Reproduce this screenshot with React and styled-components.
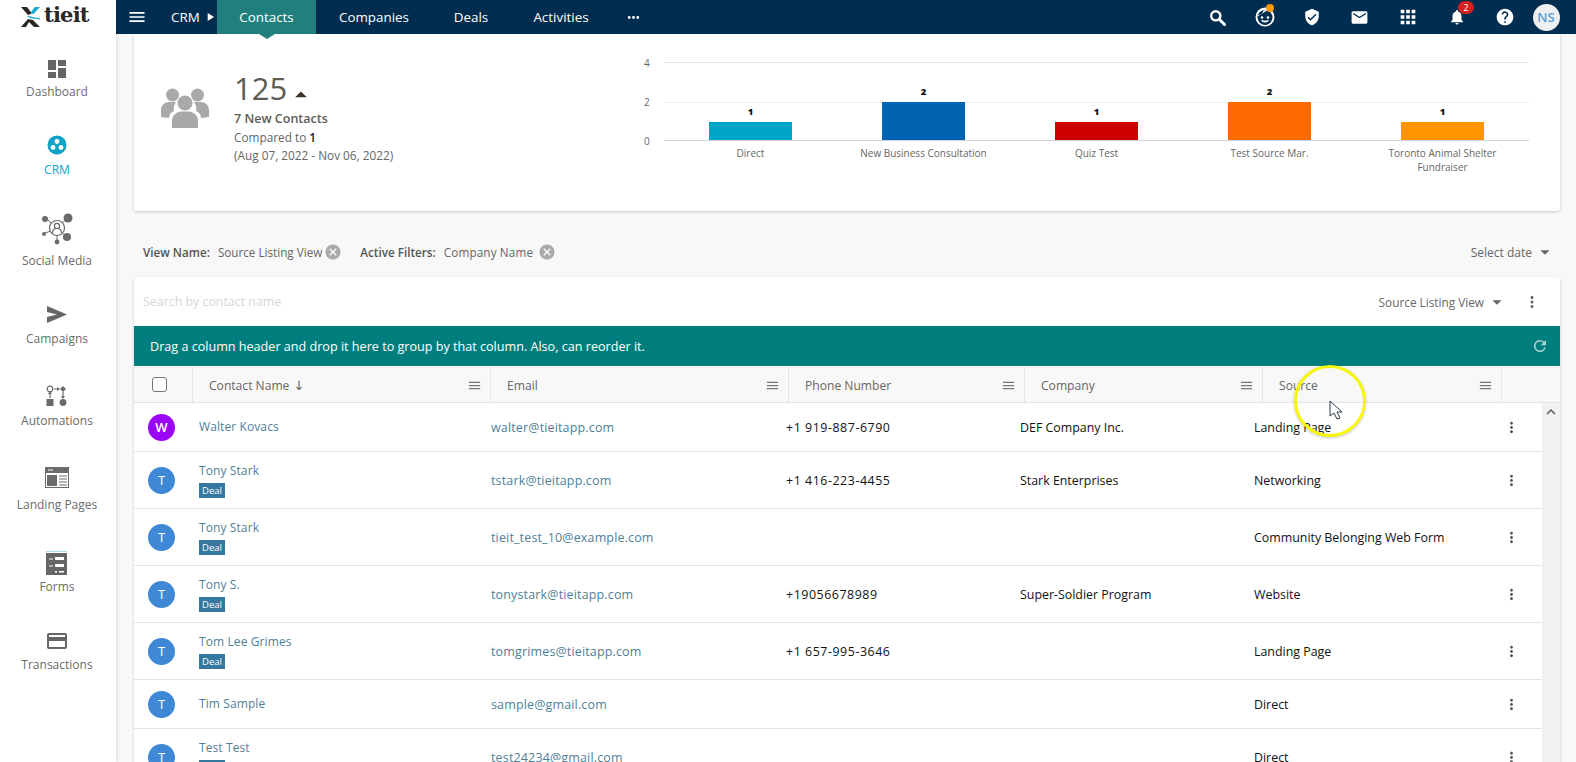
import React from 'react';
import styled, { createGlobalStyle } from 'styled-components';
import {
  MdMenu, MdVerifiedUser, MdEmail, MdApps, MdNotifications, MdHelp,
  MdDashboard, MdCreditCard, MdMoreVert, MdMoreHoriz, MdArrowDropDown,
  MdArrowDropUp, MdCancel, MdRefresh, MdPlayArrow, MdKeyboardArrowUp,
} from 'react-icons/md';

const GlobalStyle = createGlobalStyle`
  html, body {
    margin: 0;
    padding: 0;
    height: 100%;
    overflow: hidden;
    background: #f8f8f8;
    font-family: 'Open Sans', 'Noto Sans', sans-serif;
  }
  #root { height: 100%; }
`;

const Shell = styled.div`
  display: flex;
  width: 1576px;
  height: 762px;
  overflow: hidden;
  position: relative;
`;

const Sidebar = styled.aside`
  flex: 0 0 116px;
  box-sizing: border-box;
  padding-right: 2px;
  background: #fff;
  box-shadow: 1px 0 3px rgba(0, 0, 0, 0.12);
  z-index: 3;
  display: flex;
  flex-direction: column;
  align-items: center;
`;

const Logo = styled.div`
  height: 34px;
  width: 100%;
  box-sizing: border-box;
  padding-left: 21px;
  display: flex;
  align-items: center;
  gap: 4px;
  margin-bottom: 22px;
`;

const LogoWord = styled.span`
  font-family: 'DejaVu Serif', 'Liberation Serif', serif;
  font-weight: 700;
  font-size: 21px;
  line-height: 1;
  letter-spacing: -0.8px;
  color: #2b2723;
  margin-top: -5px;
`;

const NavItem = styled.div`
  display: flex;
  flex-direction: column;
  align-items: center;
  flex: 0 0 ${(p) => p.$h}px;
  width: 100%;
  color: ${(p) => (p.$active ? '#0fa3c8' : '#6b6b6b')};
  font-size: 12px;
  line-height: 16px;
  gap: ${(p) => p.$gap}px;
`;

const NavIconBox = styled.div`
  height: 26px;
  width: 36px;
  display: flex;
  align-items: center;
  justify-content: center;
  color: #666;
`;

const Column = styled.div`
  flex: 1;
  min-width: 0;
  display: flex;
  flex-direction: column;
`;

const TopBar = styled.header`
  flex: 0 0 34px;
  background: #012d50;
  display: flex;
  align-items: center;
  color: #fff;
  font-size: 13.4px;
  position: relative;
  z-index: 2;
`;

const Burger = styled.div`
  width: 43px;
  padding-left: 11px;
  box-sizing: border-box;
  display: flex;
`;

const Crumb = styled.div`
  display: flex;
  align-items: center;
  margin-left: 12px;
  width: 46px;
  gap: 3px;
`;

const Tab = styled.div`
  height: 34px;
  display: flex;
  align-items: center;
  justify-content: center;
  width: ${(p) => p.$w}px;
  position: relative;
  background: ${(p) => (p.$active ? '#217f7d' : 'transparent')};
  &::after {
    content: ${(p) => (p.$active ? "''" : 'none')};
    position: absolute;
    top: 34px;
    left: 50%;
    margin-left: -8px;
    border-left: 8px solid transparent;
    border-right: 8px solid transparent;
    border-top: 5px solid #217f7d;
  }
`;

const MoreTabs = styled.div`
  display: flex;
  margin-left: 13px;
`;

const TopIcons = styled.div`
  margin-left: auto;
  display: flex;
  align-items: center;
  height: 34px;
  padding-right: 13px;
`;

const TopIcon = styled.div`
  width: ${(p) => p.$w}px;
  display: flex;
  justify-content: center;
  align-items: center;
  position: relative;
`;

const Dot = styled.span`
  position: absolute;
  top: -3px;
  left: 25px;
  width: 8px;
  height: 8px;
  border-radius: 50%;
  background: #ff9a0e;
`;

const Badge = styled.span`
  position: absolute;
  top: -7px;
  left: 25px;
  width: 16px;
  height: 13px;
  border-radius: 7px;
  background: #d3201c;
  color: #fff;
  font-size: 9.5px;
  line-height: 13px;
  text-align: center;
`;

const Avatar = styled.div`
  width: 27px;
  height: 27px;
  border-radius: 50%;
  background: #efefef;
  color: #5a9fd4;
  font-size: 13px;
  font-weight: 600;
  display: flex;
  align-items: center;
  justify-content: center;
`;

const Content = styled.main`
  flex: 1;
  min-height: 0;
  padding: 0 16px 0 18px;
  overflow: hidden;
`;

const StatsCard = styled.section`
  height: 177px;
  background: #fff;
  border-radius: 0 0 3px 3px;
  box-shadow: 0 1px 3px rgba(0, 0, 0, 0.2);
  display: flex;
`;

const Summary = styled.div`
  flex: 0 0 486px;
  display: flex;
  padding: 36px 0 0 27px;
  box-sizing: border-box;
`;

const PeopleBox = styled.div`
  width: 73px;
  padding-top: 18px;
`;

const Big = styled.div`
  font-size: 31px;
  line-height: 36px;
  color: #5c5c54;
  display: flex;
  align-items: flex-end;
`;

const BigCaret = styled(MdArrowDropUp)`
  margin: 0 0 -3px 0;
`;

const Lines = styled.div`
  margin-top: 4px;
  font-size: 11.8px;
  line-height: 18px;
  color: #666;
  b { font-weight: 600; color: #222; }
`;

const NewLine = styled.div`
  font-weight: 600;
  font-size: 12.5px;
  color: #5c5c54;
`;

const Chart = styled.div`
  flex: 1;
  padding: 20px 31px 0 0;
  display: grid;
  grid-template-columns: 44px 1fr;
  grid-template-rows: 87px auto;
`;

const Axis = styled.div`
  display: flex;
  flex-direction: column;
  justify-content: space-between;
  padding-left: 24px;
  font-size: 10px;
  color: #666;
  line-height: 10px;
  margin-top: 4px;
  height: 88px;
`;

const Plot = styled.div`
  border-bottom: 1px solid #cfd2e3;
  margin-top: 8px;
  height: 79px;
  box-sizing: border-box;
  display: grid;
  grid-template-columns: repeat(5, 1fr);
  align-items: end;
  background: linear-gradient(#e8e8ee, #e8e8ee) top / 100% 1px no-repeat,
    linear-gradient(#f0f0f2, #f0f0f2) 0 40px / 100% 1px no-repeat;
`;

const BarCell = styled.div`
  display: flex;
  flex-direction: column;
  align-items: center;
  font-size: 9.5px;
  line-height: 13px;
  font-weight: 800;
  color: #111;
`;

const Bar = styled.div`
  width: 83px;
  height: ${(p) => p.$v * 20 - 2}px;
  background: ${(p) => p.$c};
  margin-top: 4px;
`;

const Labels = styled.div`
  grid-column: 2;
  display: grid;
  grid-template-columns: repeat(5, 1fr);
  padding-top: 6px;
  font-size: 10px;
  line-height: 13.5px;
  color: #666;
  text-align: center;
`;

const LabelCell = styled.span`
  padding: 0 10px;
`;

const FilterRow = styled.div`
  display: flex;
  align-items: center;
  height: 66px;
  box-sizing: border-box;
  padding: 15px 0 0 9px;
  font-size: 11.7px;
  color: #666;
`;

const FilterKey = styled.span`
  font-weight: 600;
  color: #555;
  margin-right: 8px;
`;

const FilterValue = styled.span`
  margin-right: ${(p) => p.$gap}px;
  letter-spacing: ${(p) => p.$track ?? 0}px;
`;

const Clear = styled(MdCancel)`
  color: #aaa;
  margin-right: ${(p) => p.$after ?? 0}px;
`;

const SelectDate = styled.div`
  margin: 1px 4px 0 auto;
  display: flex;
  align-items: center;
  gap: 2px;
  font-size: 12px;
`;

const Panel = styled.section`
  background: #fff;
  border-radius: 3px 3px 0 0;
  box-shadow: 0 1px 3px rgba(0, 0, 0, 0.2);
`;

const SearchRow = styled.div`
  height: 49px;
  display: flex;
  align-items: center;
  padding: 0 19px 0 9px;
  font-size: 11.8px;
  color: #666;
`;

const SearchText = styled.span`
  color: #d6d6d6;
  font-size: 12.4px;
  margin-right: auto;
`;

const ViewCaret = styled(MdArrowDropDown)`
  margin: 0 15px 0 2px;
`;

const GroupBar = styled.div`
  height: 40px;
  background: #007e7e;
  color: #fff;
  display: flex;
  align-items: center;
  justify-content: space-between;
  padding: 0 11px 0 16px;
  font-size: 12.6px;
`;

const HeadRow = styled.div`
  display: grid;
  grid-template-columns: 59px 298px 298px 236px 238px 239px 1fr;
  height: 34px;
  margin-top: 1px;
  background: #f8f8f8;
  border-top: 1px solid #eee;
  border-bottom: 1px solid #e4e4e4;
  font-size: 12.1px;
  color: #666;
`;

const HeadCell = styled.div`
  display: flex;
  align-items: center;
  justify-content: space-between;
  padding: 1px 8px 0 ${(p) => p.$pad ?? 16}px;
  border-right: 1px solid #e4e4e4;
  &:last-child { border-right: 0; }
`;

const SortArrow = styled.span`
  font-family: 'DejaVu Sans', sans-serif;
  font-size: 13px;
  margin-left: 4px;
`;

const Check = styled.span`
  width: 13px;
  height: 13px;
  border: 1px solid #777;
  border-radius: 3px;
  background: #fff;
  margin: 0 0 3px 3px;
`;

const Body = styled.div`
  display: flex;
`;

const Rows = styled.div`
  flex: 1;
  min-width: 0;
`;

const Row = styled.div`
  display: grid;
  grid-template-columns: 65px 292px 295px 234px 234px 249px 1fr;
  height: ${(p) => p.$h}px;
  border-bottom: 1px solid #e4e4e4;
  align-items: center;
  font-size: 12.4px;
  color: #111;
`;

const RoundAvatar = styled.span`
  width: 27px;
  height: 27px;
  border-radius: 50%;
  margin-left: 14px;
  background: ${(p) => p.$c};
  color: #fff;
  font-size: 13px;
  display: flex;
  align-items: center;
  justify-content: center;
  font-weight: ${(p) => (p.$c === '#9a05f5' ? 600 : 400)};
`;

const ContactName = styled.div`
  color: #4f7f98;
  font-size: 12px;
  line-height: 16px;
  letter-spacing: 0.1px;
`;

const EmailText = styled.div`
  color: #4f7f98;
  font-size: 12.5px;
  letter-spacing: 0.15px;
`;

const PhoneText = styled.div`
  letter-spacing: 0.55px;
`;

const DealTag = styled.span`
  display: inline-block;
  background: #34789f;
  color: #fff;
  font-size: 9.5px;
  font-weight: 500;
  line-height: 15px;
  padding: 0 3px;
  margin-top: 4px;
`;

const NameCell = styled.div`
  display: flex;
  flex-direction: column;
  align-items: flex-start;
`;

const Dots = styled.div`
  display: flex;
  color: #555;
`;

const Scroll = styled.div`
  flex: 0 0 18px;
  background: #f1f1f1;
  display: flex;
  justify-content: center;
  align-items: flex-start;
  color: #555;
`;

const Ring = styled.div`
  position: absolute;
  left: 1294px;
  top: 365px;
  width: 72px;
  height: 72px;
  box-sizing: border-box;
  border: 3.5px solid #f6f60a;
  border-radius: 50%;
  box-shadow: 0 1px 3px rgba(0, 0, 0, 0.25);
  z-index: 5;
  pointer-events: none;
`;

const Pointer = styled.svg`
  position: absolute;
  left: 1329px;
  top: 400px;
  z-index: 6;
`;

const LogoMark = () => (
  <svg width="19" height="20" viewBox="0 0 19 20">
    <path d="M0 0h6l5 6.5-4 1.5z" fill="#2b2723" />
    <path d="M19 0h-5l-4 5 2 2.5z" fill="#12a7cf" />
    <path d="M5 8.5l14 3v1L9 11z" fill="#12a7cf" />
    <path d="M0 20l7-8 5 1 7 7h-6l-5-5-3 5z" fill="#2b2723" />
  </svg>
);

const SearchGlyph = () => (
  <svg width="17" height="17" viewBox="0 0 17 17" fill="none" stroke="#fff">
    <circle cx="6.8" cy="6.8" r="4.6" strokeWidth="2.4" />
    <path d="M10.5 10.5l5 5" strokeWidth="3" strokeLinecap="round" />
  </svg>
);

const KidFace = () => (
  <svg width="20" height="20" viewBox="0 0 20 20">
    <circle cx="10" cy="10" r="9.5" fill="#fff" />
    <circle cx="10" cy="10.5" r="7.5" fill="#012d50" />
    <path d="M3 8c2 0 4-1 5-3-1-1.5 3-3 6-1.5C11 3 9 6 3 9z" fill="#fff" />
    <circle cx="7" cy="10.5" r="1.3" fill="#fff" />
    <circle cx="13" cy="10.5" r="1.3" fill="#fff" />
    <path d="M6.5 13.5c2 2 5 2 7 0-2 .8-5 .8-7 0z" fill="#fff" stroke="#fff" />
  </svg>
);

const CrmIcon = () => (
  <svg width="20" height="20" viewBox="0 0 20 20">
    <circle cx="10" cy="10" r="9.5" fill="#0fa3c8" />
    <circle cx="10" cy="6.5" r="2.4" fill="#fff" />
    <circle cx="6" cy="12.5" r="2.4" fill="#fff" />
    <circle cx="14" cy="12.5" r="2.4" fill="#fff" />
  </svg>
);

const SocialIcon = () => (
  <svg width="32" height="32" viewBox="0 0 32 32" fill="#6b6b6b" stroke="#6b6b6b">
    <path d="M6 6l10 10M27 4L16 16M26 24L16 16M16 16v12M4 20l12-4" strokeWidth="1" />
    <circle cx="4" cy="6" r="3" stroke="none" />
    <circle cx="27" cy="5" r="4.5" stroke="none" />
    <circle cx="26" cy="24" r="4" stroke="none" />
    <circle cx="16" cy="29" r="2.4" stroke="none" />
    <circle cx="3" cy="21" r="2" stroke="none" />
    <circle cx="16" cy="15" r="7.5" fill="#fff" strokeWidth="1.2" />
    <circle cx="16" cy="13" r="2.6" fill="#fff" strokeWidth="1.2" />
    <path d="M11.5 20c0-6 9-6 9 0" fill="#fff" strokeWidth="1.2" />
  </svg>
);

const CampaignIcon = () => (
  <svg width="20" height="17" viewBox="0 0 20 17">
    <path d="M0 0l20 8.5L0 17v-6l10-2.5L0 6z" fill="#666" />
  </svg>
);

const AutomationIcon = () => (
  <svg width="22" height="22" viewBox="0 0 22 22" fill="#6b6b6b" stroke="#6b6b6b">
    <circle cx="4" cy="4" r="2.8" fill="#fff" strokeWidth="1.2" />
    <path d="M8 4h5M4 8v5M17 7v6" strokeWidth="1.2" />
    <path d="M11 2l3 2-3 2zM2 9l2-3 2 3zM15 11l2 3 2-3z" stroke="none" />
    <path d="M17 1l3 3-3 3-3-3z" stroke="none" />
    <rect x="0.5" y="14" width="7" height="7" stroke="none" />
    <circle cx="17" cy="17.5" r="3.4" stroke="none" />
  </svg>
);

const LandingIcon = () => (
  <svg width="24" height="21" viewBox="0 0 24 21">
    <rect x="0.5" y="0.5" width="23" height="20" fill="#fff" stroke="#6b6b6b" />
    <rect x="0" y="0" width="24" height="6" fill="#6b6b6b" />
    <rect x="3" y="2.5" width="5" height="1" fill="#fff" />
    <rect x="2" y="8" width="10" height="11" fill="#6b6b6b" />
    <path d="M14 9h8M14 12h8M14 15h8M14 18h8" stroke="#6b6b6b" />
  </svg>
);

const FormsIcon = () => (
  <svg width="22" height="24" viewBox="0 0 22 24">
    <rect x="0" y="0" width="21" height="1" fill="#a9d8ea" />
    <rect x="0" y="2" width="21" height="22" fill="#666" />
    <path d="M3 8h4M3 15h4" stroke="#fff" />
    <rect x="9" y="6" width="9" height="3" fill="#fff" />
    <rect x="9" y="13" width="9" height="3" fill="#fff" />
    <rect x="9" y="20" width="2" height="1.5" fill="#fff" />
    <rect x="13" y="20" width="5" height="1.5" fill="#fff" />
  </svg>
);

const PeopleIcon = () => (
  <svg width="48" height="40" viewBox="0 0 48 40" fill="#a9a9a9">
    <circle cx="11.5" cy="7" r="6.5" />
    <circle cx="36.5" cy="7" r="6.5" />
    <path d="M0 29V22c0-5 4-8 8-8h7c-2 3-3 6-2 9-3 1-5 4-5 7z" />
    <path d="M48 29V22c0-5-4-8-8-8h-7c2 3 3 6 2 9 3 1 5 4 5 7z" />
    <circle cx="24" cy="15" r="7.5" />
    <path d="M11 40V33c0-6 5-9.5 9-9.5h8c4 0 9 3.5 9 9.5v7c-8 1-18 1-26 0z" />
  </svg>
);

const navItems = [
  { label: 'Dashboard', h: 76, gap: 2, icon: <MdDashboard size={24} /> },
  { label: 'CRM', h: 84, gap: 4, active: true, icon: <CrmIcon /> },
  { label: 'Social Media', h: 85, gap: 11, icon: <SocialIcon /> },
  { label: 'Campaigns', h: 82, gap: 4, icon: <CampaignIcon /> },
  { label: 'Automations', h: 81, gap: 4, icon: <AutomationIcon /> },
  { label: 'Landing Pages', h: 86, gap: 7, icon: <LandingIcon /> },
  { label: 'Forms', h: 78, gap: 3, icon: <FormsIcon /> },
  { label: 'Transactions', h: 80, gap: 3, icon: <MdCreditCard size={24} /> },
];

const bars = [
  { label: 'Direct', v: 1, c: '#00a4c7' },
  { label: 'New Business Consultation', v: 2, c: '#0063b1' },
  { label: 'Quiz Test', v: 1, c: '#cc0000' },
  { label: 'Test Source Mar.', v: 2, c: '#ff6a00' },
  { label: 'Toronto Animal Shelter Fundraiser', v: 1, c: '#ff9600' },
];

const contacts = [
  { i: 'W', c: '#9a05f5', name: 'Walter Kovacs', email: 'walter@tieitapp.com', phone: '+1 919-887-6790', company: 'DEF Company Inc.', source: 'Landing Page', h: 48 },
  { i: 'T', name: 'Tony Stark', deal: true, email: 'tstark@tieitapp.com', phone: '+1 416-223-4455', company: 'Stark Enterprises', source: 'Networking', h: 56 },
  { i: 'T', name: 'Tony Stark', deal: true, email: 'tieit_test_10@example.com', source: 'Community Belonging Web Form', h: 56 },
  { i: 'T', name: 'Tony S.', deal: true, email: 'tonystark@tieitapp.com', phone: '+19056678989', company: 'Super-Soldier Program', source: 'Website', h: 56 },
  { i: 'T', name: 'Tom Lee Grimes', deal: true, email: 'tomgrimes@tieitapp.com', phone: '+1 657-995-3646', source: 'Landing Page', h: 56 },
  { i: 'T', name: 'Tim Sample', email: 'sample@gmail.com', source: 'Direct', h: 48 },
  { i: 'T', name: 'Test Test', deal: true, email: 'test24234@gmail.com', source: 'Direct', h: 56 },
];

const columns = ['Email', 'Phone Number', 'Company', 'Source'];

export default function App() {
  return (
    <>
      <GlobalStyle />
      <Shell>
        <Sidebar>
          <Logo>
            <LogoMark />
            <LogoWord>tieit</LogoWord>
          </Logo>
          {navItems.map((n) => (
            <NavItem key={n.label} $h={n.h} $active={n.active} $gap={n.gap}>
              <NavIconBox>{n.icon}</NavIconBox>
              {n.label}
            </NavItem>
          ))}
        </Sidebar>
        <Column>
          <TopBar>
            <Burger><MdMenu size={20} /></Burger>
            <Crumb>CRM<MdPlayArrow size={14} /></Crumb>
            <Tab $w={99} $active>Contacts</Tab>
            <Tab $w={116}>Companies</Tab>
            <Tab $w={78}>Deals</Tab>
            <Tab $w={102}>Activities</Tab>
            <MoreTabs><MdMoreHoriz size={17} /></MoreTabs>
            <TopIcons>
              <TopIcon $w={48}><SearchGlyph /></TopIcon>
              <TopIcon $w={48}><KidFace /><Dot /></TopIcon>
              <TopIcon $w={46}><MdVerifiedUser size={18} /></TopIcon>
              <TopIcon $w={48}><MdEmail size={19} /></TopIcon>
              <TopIcon $w={50}><MdApps size={22} /></TopIcon>
              <TopIcon $w={48}><MdNotifications size={18} /><Badge>2</Badge></TopIcon>
              <TopIcon $w={48}><MdHelp size={20} /></TopIcon>
              <TopIcon $w={34}><Avatar>NS</Avatar></TopIcon>
            </TopIcons>
          </TopBar>
          <Content>
            <StatsCard>
              <Summary>
                <PeopleBox><PeopleIcon /></PeopleBox>
                <div>
                  <Big>125<BigCaret size={28} color="#3a3426" /></Big>
                  <Lines>
                    <NewLine>7 New Contacts</NewLine>
                    <div>Compared to <b>1</b></div>
                    <div>(Aug 07, 2022 - Nov 06, 2022)</div>
                  </Lines>
                </div>
              </Summary>
              <Chart>
                <Axis><span>4</span><span>2</span><span>0</span></Axis>
                <Plot>
                  {bars.map((b) => (
                    <BarCell key={b.label}>
                      {b.v}
                      <Bar $v={b.v} $c={b.c} />
                    </BarCell>
                  ))}
                </Plot>
                <Labels>
                  {bars.map((b) => <LabelCell key={b.label}>{b.label}</LabelCell>)}
                </Labels>
              </Chart>
            </StatsCard>
            <FilterRow>
              <FilterKey>View Name:</FilterKey>
              <FilterValue $gap={2}>Source Listing View</FilterValue>
              <Clear size={18} $after={18} />
              <FilterKey>Active Filters:</FilterKey>
              <FilterValue $gap={5} $track={0.15}>Company Name</FilterValue>
              <Clear size={18} />
              <SelectDate>Select date <MdArrowDropDown size={22} /></SelectDate>
            </FilterRow>
            <Panel>
              <SearchRow>
                <SearchText>Search by contact name</SearchText>
                Source Listing View
                <ViewCaret size={22} />
                <MdMoreVert size={18} />
              </SearchRow>
              <GroupBar>
                Drag a column header and drop it here to group by that column. Also, can reorder it.
                <MdRefresh size={18} color="#a8d4d4" />
              </GroupBar>
              <HeadRow>
                <HeadCell $pad={15}><Check /></HeadCell>
                <HeadCell>
                  <span>Contact Name<SortArrow>↓</SortArrow></span>
                  <MdMenu size={15} color="#777" />
                </HeadCell>
                {columns.map((c) => (
                  <HeadCell key={c}>{c}<MdMenu size={15} color="#777" /></HeadCell>
                ))}
                <HeadCell />
              </HeadRow>
              <Body>
                <Rows>
                  {contacts.map((r) => (
                    <Row key={r.email} $h={r.h}>
                      <RoundAvatar $c={r.c || '#3f88d6'}>{r.i}</RoundAvatar>
                      <NameCell>
                        <ContactName>{r.name}</ContactName>
                        {r.deal && <DealTag>Deal</DealTag>}
                      </NameCell>
                      <EmailText>{r.email}</EmailText>
                      <PhoneText>{r.phone}</PhoneText>
                      <div>{r.company}</div>
                      <div>{r.source}</div>
                      <Dots><MdMoreVert size={17} /></Dots>
                    </Row>
                  ))}
                </Rows>
                <Scroll><MdKeyboardArrowUp size={18} /></Scroll>
              </Body>
            </Panel>
          </Content>
        </Column>
        <Ring />
        <Pointer width="14" height="20" viewBox="0 0 14 20">
          <path d="M1 1v15l4-3 3 6 3-1-3-6h5z" fill="#fff" stroke="#2b3a4a" strokeWidth="1" />
        </Pointer>
      </Shell>
    </>
  );
}
